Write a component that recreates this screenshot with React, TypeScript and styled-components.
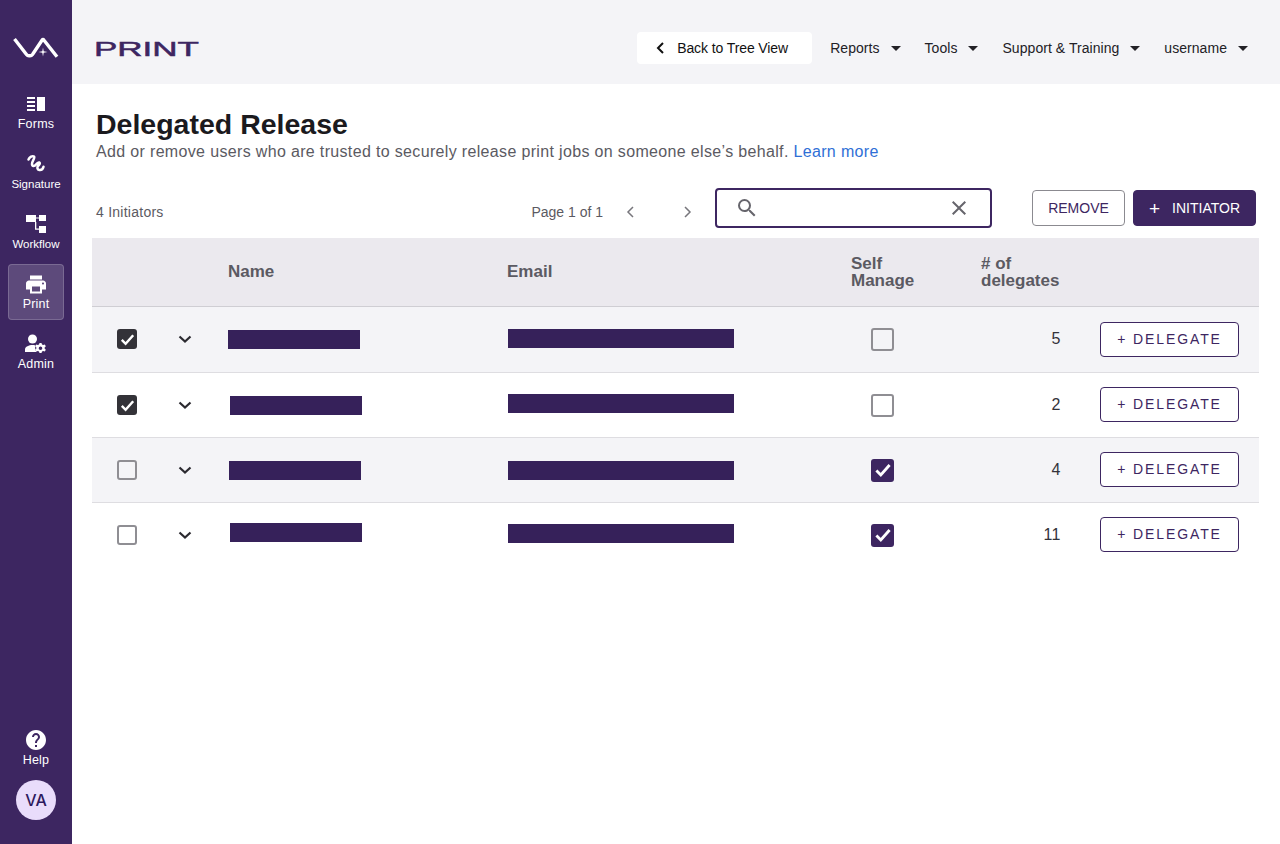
import React from 'react';
import styled, { createGlobalStyle } from 'styled-components';
import { MdClose, MdHelp, MdPrint, MdSearch } from 'react-icons/md';

const purple = '#3d2661';
const ink = '#1b1a1e';
const muted = '#5b5a62';
const font = `'Liberation Sans', Arial, sans-serif`;

const GlobalStyle = createGlobalStyle`
  html, body { margin: 0; height: 100%; background: #fff; }
  body { font-family: ${font}; color: ${ink}; }
  #root { height: 100%; }
  * { box-sizing: border-box; }
`;

const Page = styled.div`
  display: flex;
  width: 1280px;
  height: 844px;
  overflow: hidden;
`;

// SIDEBAR
const Sidebar = styled.aside`
  width: 72px;
  flex: none;
  display: flex;
  flex-direction: column;
  align-items: center;
  background: ${purple};
  color: #fff;
`;

const LogoSlot = styled.div`
  height: 84px;
  padding-top: 12px;
  display: flex;
  align-items: center;
  justify-content: center;
`;

const NavList = styled.nav`
  display: flex;
  flex-direction: column;
  gap: 4px;
`;

const NavItem = styled.a<{ $active?: boolean; $small?: boolean }>`
  width: 56px;
  height: 56px;
  display: flex;
  flex-direction: column;
  align-items: center;
  justify-content: flex-end;
  padding-bottom: 8px;
  gap: 1px;
  font-size: ${p => (p.$small ? 11.5 : 12.5)}px;
  letter-spacing: ${p => (p.$small ? 0 : 0.2)}px;
  line-height: 14px;
  white-space: nowrap;
  color: #fff;
  border: 1px solid ${p => (p.$active ? 'rgba(255,255,255,0.18)' : 'transparent')};
  border-radius: 4px;
  background: ${p => (p.$active ? 'rgba(255,255,255,0.17)' : 'transparent')};
`;

const IconSlot = styled.span`
  height: 24px;
  width: 24px;
  display: flex;
  align-items: center;
  justify-content: center;
`;

const SideBottom = styled.div`
  margin-top: auto;
  padding-bottom: 24px;
  display: flex;
  flex-direction: column;
  align-items: center;
  gap: 4px;
`;

const Avatar = styled.div`
  width: 40px;
  height: 40px;
  border-radius: 50%;
  background: #e9dcfb;
  color: #2e1a5e;
  display: flex;
  align-items: center;
  justify-content: center;
  font: 500 16px Inter, ${font};
`;

// MAIN
const Main = styled.main`
  flex: 1;
  min-width: 0;
  display: flex;
  flex-direction: column;
`;

const TopBar = styled.header`
  height: 84px;
  flex: none;
  display: flex;
  align-items: center;
  padding: 12px 32px 0 22px;
  background: #f4f4f7;
`;

const Brand = styled.svg`
  display: block;
  margin-right: auto;
`;

const BackButton = styled.button`
  width: 175px;
  height: 32px;
  display: flex;
  align-items: center;
  gap: 9px;
  padding: 0 0 0 17px;
  border: 0;
  border-radius: 4px;
  background: #fff;
  color: #111;
  font: 14px ${font};
  letter-spacing: -0.1px;
  margin-right: 18px;
`;

const Menu = styled.div<{ $last?: boolean }>`
  display: flex;
  align-items: center;
  gap: 11px;
  font-size: 14px;
  letter-spacing: 0.05px;
  color: #222126;
  margin-right: ${p => (p.$last ? 0 : 24)}px;
`;

const Caret = styled.span`
  width: 0;
  height: 0;
  border-left: 5px solid transparent;
  border-right: 5px solid transparent;
  border-top: 5px solid #222126;
`;

const Content = styled.div`
  flex: 1;
  padding: 24px 21px 0 20px;
`;

const Title = styled.h1`
  margin: 0 0 0 4px;
  font-size: 28.5px;
  line-height: 32px;
  font-weight: 700;
  color: ${ink};
`;

const Subtitle = styled.p`
  margin: 0 0 0 4px;
  font-size: 16px;
  line-height: 24px;
  letter-spacing: 0.34px;
  color: ${muted};
  a { color: #2f6fd6; text-decoration: none; }
`;

const Toolbar = styled.div`
  margin-top: 24px;
  height: 40px;
  display: flex;
  align-items: center;
  padding: 0 3px 0 4px;
`;

const Count = styled.span`
  font-size: 14px;
  line-height: 16px;
  letter-spacing: 0.25px;
  padding-top: 8px;
  color: ${muted};
  margin-right: auto;
`;

const PageLabel = styled.span`
  font-size: 14px;
  line-height: 16px;
  color: ${muted};
`;

const PageArrow = styled.span`
  width: 56px;
  display: flex;
  justify-content: center;
`;

const Pager = styled.div`
  display: flex;
  align-items: center;
  padding-top: 8px;
`;

const SearchBox = styled.div`
  width: 277px;
  height: 40px;
  margin-right: 40px;
  display: flex;
  align-items: center;
  justify-content: space-between;
  padding: 0 19px 0 18px;
  border: 2px solid ${purple};
  border-radius: 4px;
  color: #66656c;
`;

const ToolButton = styled.button<{ $primary?: boolean }>`
  height: 36px;
  display: flex;
  align-items: center;
  justify-content: center;
  gap: 12px;
  padding: 0;
  width: ${p => (p.$primary ? 123 : 93)}px;
  margin-left: ${p => (p.$primary ? 8 : 0)}px;
  border: 1px solid ${p => (p.$primary ? purple : '#8b8a90')};
  border-radius: 4px;
  background: ${p => (p.$primary ? purple : '#fff')};
  color: ${p => (p.$primary ? '#fff' : purple)};
  font: 14px ${font};
`;

const Plus = styled.span`
  font-size: 19px;
  line-height: 19px;
`;

// TABLE
const cols = '70px 46px 299px 344px 130px 80px 198px';

const HeadRow = styled.div`
  margin-top: 10px;
  height: 69px;
  display: grid;
  grid-template-columns: ${cols};
  align-items: center;
  background: #ebe9ee;
  border-bottom: 1px solid #cfced3;
  font-size: 17px;
  line-height: 17px;
  font-weight: 700;
  color: ${muted};
`;

const Row = styled.div<{ $shaded?: boolean; $first?: boolean; $last?: boolean }>`
  height: ${p => (p.$first ? 66 : 65)}px;
  padding-bottom: ${p => (p.$first ? 1 : 0)}px;
  display: grid;
  grid-template-columns: ${cols};
  align-items: center;
  background: ${p => (p.$shaded ? '#f4f4f7' : '#fff')};
  border-bottom: 1px solid ${p => (p.$last ? 'transparent' : '#dedde1')};
`;

const Cell = styled.div<{ $pad?: number; $center?: boolean; $right?: boolean }>`
  display: flex;
  align-items: center;
  padding-left: ${p => p.$pad ?? 0}px;
  justify-content: ${p => (p.$center ? 'center' : p.$right ? 'flex-end' : 'flex-start')};
`;

const HeadCell = styled(Cell)`
  margin-bottom: 2px;
`;

const HeadLabel = styled.span`
  display: block;
`;

const Redacted = styled.div<{ $w: number; $dx: number; $dy: number }>`
  width: ${p => p.$w}px;
  height: 19px;
  background: #36215a;
  margin-left: ${p => p.$dx}px;
  margin-top: ${p => p.$dy * 2}px;
`;

const Box = styled.span<{ $on?: boolean; $dark?: boolean; $size: number }>`
  width: ${p => p.$size}px;
  height: ${p => p.$size}px;
  display: flex;
  align-items: center;
  justify-content: center;
  border-radius: 3px;
  background: ${p => (p.$on ? (p.$dark ? '#333238' : purple) : 'transparent')};
  border: ${p => (p.$on ? '0' : '2px solid #8f8e93')};
`;

const Num = styled.span`
  font-size: 16px;
  letter-spacing: 0.5px;
  color: #33323a;
`;

const DelegateButton = styled.button<{ $up?: boolean }>`
  width: 139px;
  height: 35px;
  margin-left: 39px;
  margin-top: ${p => (p.$up ? -1 : 0)}px;
  border: 1px solid ${purple};
  border-radius: 4px;
  background: #fff;
  color: ${purple};
  font: 14px ${font};
  letter-spacing: 1.9px;
  padding: 0 0 ${p => (p.$up ? 2 : 0)}px;
`;

const navItems = [
  { label: 'Forms', icon: <FormsIcon /> },
  { label: 'Signature', icon: <SignatureIcon />, small: true },
  { label: 'Workflow', icon: <WorkflowIcon />, small: true },
  { label: 'Print', icon: <MdPrint size={25} />, active: true },
  { label: 'Admin', icon: <AdminIcon /> },
];

const rows = [
  { left: true, dark: true, self: false, count: 5, name: [0, 0.5], email: [0, -0.5] },
  { left: true, dark: true, self: false, count: 2, name: [2, 0], email: [0, -1.5] },
  { left: false, dark: false, self: true, count: 4, name: [1, 0], email: [0, 0] },
  { left: false, dark: false, self: true, count: 11, name: [2, -3], email: [0, -1.5] },
];

function FormsIcon() {
  return (
    <svg width="18" height="14" viewBox="0 0 18 14" fill="#fff">
      <rect x="0" y="0" width="8" height="2" />
      <rect x="0" y="4" width="8" height="2" />
      <rect x="0" y="8" width="8" height="2" />
      <rect x="0" y="12" width="8" height="2" />
      <rect x="10" y="0" width="8" height="14" />
    </svg>
  );
}

function SignatureIcon() {
  return (
    <svg width="20" height="20" viewBox="0 0 20 20" fill="none" stroke="#fff" strokeWidth="2.500" strokeLinecap="round" strokeLinejoin="round">
      <path d="M2.500 5.500C3.500 3 6.500 1.500 8 2.500c1.500 1.200-2 4.500-2 7.500 0 2.500 2.500 2.500 4 .5 1-1.300 2-2.500 3.200-2 1.500.7-.2 2.500-1.200 3.500-1 1.200-.8 3.800 1.200 4 2 .3 3.800-1 4.300-3.200" />
    </svg>
  );
}

function WorkflowIcon() {
  return (
    <svg width="20" height="18" viewBox="0 0 20 18" fill="#fff">
      <rect x="0" y="0" width="10" height="7" />
      <rect x="13" y="0" width="7" height="6" />
      <rect x="13" y="11" width="7" height="7" />
      <path d="M10 2.400h3v1.200h-3zM9 7h1.300v6.400H13v1.300H9z" />
    </svg>
  );
}

function AdminIcon() {
  return (
    <svg width="22" height="20" viewBox="0 0 22 20" fill="#fff">
      <circle cx="7.500" cy="5" r="4.500" />
      <path d="M0 18v-2.500C0 12.500 4 11 7.500 11c1 0 2 .1 2.900.4-.5 1.900-.2 4.500 1.100 6.600z" />
      <path d="M16.500 9l.5 1.600 1.200.5 1.500-.7 1.200 1.800-1.200 1.100v1.400l1.200 1.100-1.200 1.800-1.500-.7-1.200.5-.5 1.600h-2l-.5-1.600-1.200-.5-1.500.7-1.200-1.800 1.200-1.100v-1.400l-1.200-1.100 1.200-1.800 1.500.7 1.200-.5.5-1.600zM15.500 12.500a1.800 1.800 0 1 0 0 3.600 1.800 1.800 0 0 0 0-3.600z" />
    </svg>
  );
}

function VaLogo() {
  return (
    <svg width="46" height="22" viewBox="0 0 46 22" fill="none">
      <path d="M1.500 2L13.500 17.500Q14.500 18.800 16 18.800H17Q18.500 18.800 19.500 17.500L29 3.200Q30 1.800 31 3.200L44 19.800" stroke="#fff" strokeWidth="3.400" />
      <path d="M30 10.500l.7 3.800 3.800.7-3.800.7-.7 3.800-.7-3.800-3.800-.7 3.800-.7z" fill="#fff" />
    </svg>
  );
}

function Check({ size }: { size: number }) {
  return (
    <svg width={size} height={size} viewBox="0 0 20 20" fill="none" stroke="#fff" strokeWidth="2.600">
      <path d="M4 10.500l4 4 8-9" />
    </svg>
  );
}

function Chevron({ dir, color = '#333', size = 14, width = 2 }: { dir: 'left' | 'right' | 'down'; color?: string; size?: number; width?: number }) {
  const d = { left: 'M9 2L4 7l5 5', right: 'M5 2l5 5-5 5', down: 'M1.500 4.500L7 9.500l5.500-5' }[dir];
  return (
    <svg width={size} height={size} viewBox="0 0 14 14" fill="none" stroke={color} strokeWidth={width}>
      <path d={d} />
    </svg>
  );
}

export default function App() {
  return (
    <>
      <GlobalStyle />
      <Page>
        <Sidebar>
          <LogoSlot>
            <VaLogo />
          </LogoSlot>
          <NavList>
            {navItems.map(item => (
              <NavItem key={item.label} $active={item.active} $small={item.small}>
                <IconSlot>{item.icon}</IconSlot>
                {item.label}
              </NavItem>
            ))}
          </NavList>
          <SideBottom>
            <NavItem>
              <IconSlot>
                <MdHelp size={26} />
              </IconSlot>
              Help
            </NavItem>
            <Avatar>VA</Avatar>
          </SideBottom>
        </Sidebar>
        <Main>
          <TopBar>
            <Brand width="108" height="26" viewBox="0 0 108 26">
              <text x="0" y="20.500" fontFamily="'Liberation Sans', Arial, sans-serif" fontSize="21" fill={purple} stroke={purple} strokeWidth="0.5" textLength="105" lengthAdjust="spacingAndGlyphs">
                PRINT
              </text>
            </Brand>
            <BackButton>
              <Chevron dir="left" color="#111" />
              Back to Tree View
            </BackButton>
            <Menu>
              Reports <Caret />
            </Menu>
            <Menu>
              Tools <Caret />
            </Menu>
            <Menu>
              Support &amp; Training <Caret />
            </Menu>
            <Menu $last>
              username <Caret />
            </Menu>
          </TopBar>
          <Content>
            <Title>Delegated Release</Title>
            <Subtitle>
              Add or remove users who are trusted to securely release print jobs on someone else’s behalf. <a href="#">Learn more</a>
            </Subtitle>
            <Toolbar>
              <Count>4 Initiators</Count>
              <Pager>
                <PageLabel>Page 1 of 1</PageLabel>
                <PageArrow>
                  <Chevron dir="left" color="#77767c" size={14} width={1.5} />
                </PageArrow>
                <PageArrow>
                  <Chevron dir="right" color="#77767c" size={14} width={1.5} />
                </PageArrow>
              </Pager>
              <SearchBox>
                <MdSearch size={24} />
                <MdClose size={24} />
              </SearchBox>
              <ToolButton>REMOVE</ToolButton>
              <ToolButton $primary>
                <Plus>+</Plus> INITIATOR
              </ToolButton>
            </Toolbar>
            <HeadRow>
              <span />
              <span />
              <HeadCell $pad={20}>Name</HeadCell>
              <HeadCell>Email</HeadCell>
              <HeadLabel>
                Self
                <br />
                Manage
              </HeadLabel>
              <HeadLabel>
                # of
                <br />
                delegates
              </HeadLabel>
              <span />
            </HeadRow>
            {rows.map((row, i) => (
              <Row key={i} $shaded={i % 2 === 0} $first={i === 0} $last={i === rows.length - 1}>
                <Cell $center>
                  <Box $on={row.left} $dark={row.dark} $size={20}>
                    {row.left && <Check size={19} />}
                  </Box>
                </Cell>
                <Cell $center>
                  <Chevron dir="down" color="#2b2a30" width={2.2} />
                </Cell>
                <Cell $pad={20}>
                  <Redacted $w={132} $dx={row.name[0]} $dy={row.name[1]} />
                </Cell>
                <Cell>
                  <Redacted $w={226} $dx={1} $dy={row.email[1]} />
                </Cell>
                <Cell $pad={20}>
                  <Box $on={row.self} $size={23}>
                    {row.self && <Check size={22} />}
                  </Box>
                </Cell>
                <Cell $right>
                  <Num>{row.count}</Num>
                </Cell>
                <Cell>
                  <DelegateButton $up={i > 0}>+ DELEGATE</DelegateButton>
                </Cell>
              </Row>
            ))}
          </Content>
        </Main>
      </Page>
    </>
  );
}
